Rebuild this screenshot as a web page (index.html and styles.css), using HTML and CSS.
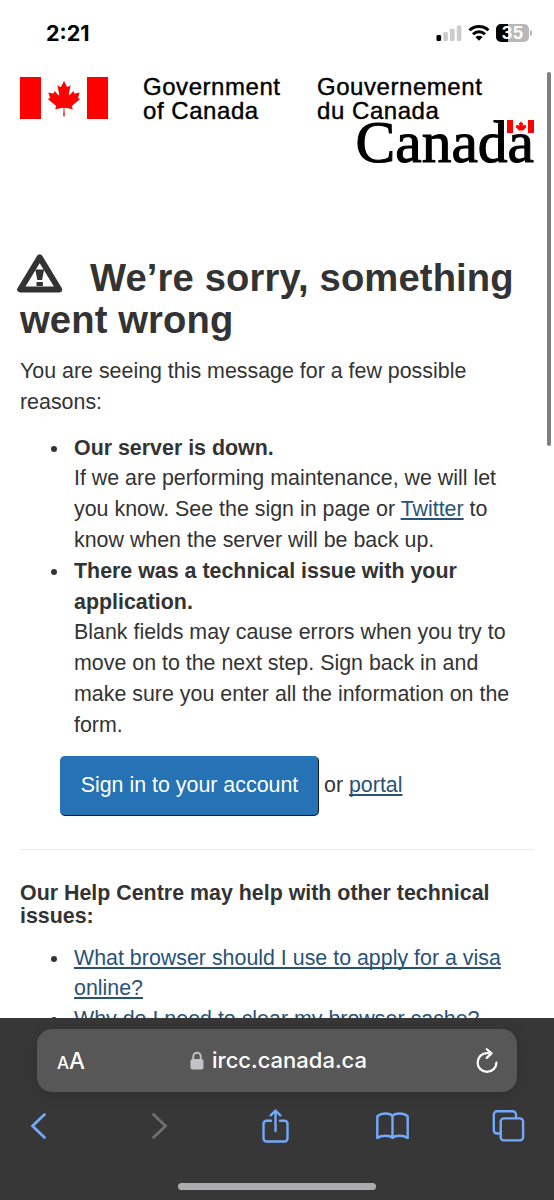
FILE: index.html
```html
<!DOCTYPE html>
<html lang="en">
<head>
  <meta charset="utf-8">
  <title>We’re sorry, something went wrong</title>
  <link rel="stylesheet" href="styles.css">
</head>
<body>
  <svg class="symbols">
    <symbol id="leaf" viewBox="-1950 -2030 3900 4060">
      <path d="m-90 2030 45-863a95 95 0 0 0-111-98l-859 151 116-320a65 65 0 0 0-20-73l-941-762 212-99a65 65 0 0 0 34-79l-186-572 542 115a65 65 0 0 0 73-38l105-247 423 454a65 65 0 0 0 111-57l-204-1052 327 189a65 65 0 0 0 91-27l332-652 332 652a65 65 0 0 0 91 27l327-189-204 1052a65 65 0 0 0 111 57l423-454 105 247a65 65 0 0 0 73 38l542-115-186 572a65 65 0 0 0 34 79l212 99-941 762a65 65 0 0 0-20 73l116 320-859-151a95 95 0 0 0-111 98l45 863z"/>
    </symbol>
  </svg>

  <div class="status-bar">
    <span class="time">2:21</span>
    <div class="status-icons">
      <svg class="signal" width="26" height="16" viewBox="0 0 26 16">
        <rect x="0.5" y="10" width="4.6" height="6" rx="1.3" fill="#000"/>
        <rect x="7.3" y="7" width="4.6" height="9" rx="1.3" fill="#ccc"/>
        <rect x="14" y="3.7" width="4.6" height="12.3" rx="1.3" fill="#ccc"/>
        <rect x="20.8" y="0.5" width="4.6" height="15.5" rx="1.3" fill="#ccc"/>
      </svg>
      <svg class="wifi" width="22" height="16" viewBox="0 0 22 16">
        <path d="M1.5 5.3a13.8 13.8 0 0 1 19 0M5 9.2a8.7 8.7 0 0 1 12 0" fill="none" stroke="#000" stroke-width="2.9"/>
        <path d="M7.4 12.1a5.3 5.3 0 0 1 7.2 0L11 15.8z"/>
      </svg>
      <div class="battery">35</div>
      <span class="battery-tip"></span>
    </div>
  </div>

  <main class="page">
    <header class="brand">
      <div class="flag"><svg><use href="#leaf"/></svg></div>
      <div class="gov gov-en">Government<br>of Canada</div>
      <div class="gov gov-fr">Gouvernement<br>du Canada</div>
    </header>
    <div class="wordmark">
      <span>Canada</span>
      <div class="flag flag-small"><svg><use href="#leaf"/></svg></div>
    </div>

    <h1><svg class="warning" width="46" height="39" viewBox="0 0 46 39">
        <path d="M22.7 3.4 3.2 35.5h39z" fill="none" stroke="#333" stroke-width="6" stroke-linejoin="round"/>
        <path d="M18.3 15.4h8.8l-2 10.7h-4.8zM19.5 28h6.4v4h-6.4z" fill="#333"/>
      </svg>We’re sorry, something went wrong</h1>
    <p>You are seeing this message for a few possible reasons:</p>
    <ul>
      <li><strong>Our server is down.</strong><br>If we are performing maintenance, we will let you know. See the sign in page or <a href="#">Twitter</a> to know when the server will be back up.</li>
      <li><strong>There was a technical issue with your application.</strong><br>Blank fields may cause errors when you try to move on to the next step. Sign back in and make sure you enter all the information on the form.</li>
    </ul>
    <div class="sign-in">
      <button>Sign in to your account</button>
      <span>or <a href="#">portal</a></span>
    </div>
    <hr>
    <h2>Our Help Centre may help with other technical issues:</h2>
    <ul>
      <li><a href="#">What browser should I use to apply for a visa online?</a></li>
      <li><a href="#">Why do I need to clear my browser cache?</a></li>
    </ul>
    <div class="scrollbar"></div>
  </main>

  <footer class="browser">
    <div class="address">
      <span class="text-size"><small>A</small>A</span>
      <div class="url">
        <svg width="14" height="19" viewBox="0 0 14 19">
          <path d="M3.3 9V5.4a3.7 3.7 0 0 1 7.4 0V9" fill="none" stroke="#c2c1c8" stroke-width="1.9"/>
          <rect x="0.5" y="8" width="13" height="10.5" rx="2" fill="#c2c1c8"/>
        </svg>
        <span>ircc.canada.ca</span>
      </div>
      <svg class="reload" width="22" height="26" viewBox="0 0 22 26" fill="none" stroke="#fff" stroke-width="2.2" stroke-linecap="round" stroke-linejoin="round">
        <path d="M20.4 14.5a9.4 9.4 0 1 1-9.4-9.4h4.500M10.800 1.200l4.700 4.200-4.700 4.500"/>
      </svg>
    </div>
    <nav class="toolbar">
      <svg height="26" viewBox="0 0 16 26"><path d="M14 1.6 2 13l12 11.4" stroke-width="2.8"/></svg>
      <svg class="off" height="26" viewBox="0 0 16 26"><path d="m2 1.6 12 11.4L2 24.4" stroke-width="2.8"/></svg>
      <svg height="34" viewBox="0 0 27 34"><path d="M9 11.7H4.500a3 3 0 0 0-3 3v14.800a3 3 0 0 0 3 3h18a3 3 0 0 0 3-3V14.700a3 3 0 0 0-3-3H18M13.500 22V1.700M8.700 6.300l4.800-4.800 4.800 4.800"/></svg>
      <svg height="28" viewBox="0 0 33 28"><path d="M16.500 4.300C14 .6 5.400.6 1.300 4.300v21.600c4-2.800 12.500-2.800 15.200 0M16.500 4.300c2.500-3.700 11.100-3.700 15.200 0v21.600c-4-2.800-12.500-2.800-15.200 0zM16.500 4.300v21.600"/></svg>
      <svg height="32" viewBox="0 0 32 32"><path d="M8 23.500H4.500a3.200 3.200 0 0 1-3.200-3.200V4.500a3.200 3.200 0 0 1 3.200-3.200h15.800a3.200 3.200 0 0 1 3.200 3.200V8"/><rect x="8.200" y="8.400" width="22.400" height="22" rx="3.200"/></svg>
    </nav>
    <div class="home-bar"></div>
  </footer>
</body>
</html>
```

FILE: styles.css
```css
* {
  box-sizing: border-box;
}

body {
  display: flex;
  flex-direction: column;
  height: 1200px;
  margin: 0;
  overflow: hidden;
  background-color: #fff;
  color: #333;
  font-family: "Liberation Sans", Arial, sans-serif;
  font-size: 21.4px;
  line-height: 30.8px;
}

.symbols {
  position: absolute;
  width: 0;
  height: 0;
}

.status-bar {
  display: flex;
  justify-content: space-between;
  height: 72px;
  padding: 18px 22px 0 46px;
  color: #000;
  font-family: Inter, sans-serif;
}

.time {
  font-size: 21.5px;
  font-weight: 700;
}

.status-icons {
  display: flex;
  height: 30px;
  align-items: center;
}

.wifi {
  margin: 0 6px 0 6px;
}

.battery {
  width: 33px;
  height: 18px;
  border-radius: 5px;
  background: linear-gradient(to right, #000 12px, #b8b8b8 12px);
  color: #fff;
  font-size: 17px;
  font-weight: 700;
  line-height: 18px;
  text-align: center;
}

.battery-tip {
  width: 2px;
  height: 6px;
  margin-left: 1px;
  border-radius: 0 2px 2px 0;
  background-color: #b8b8b8;
}

.page {
  position: relative;
  height: 946px;
  padding: 5px 20px 0;
  overflow: hidden;
}

.brand {
  display: flex;
  height: 43px;
}

.flag {
  display: flex;
  justify-content: center;
  align-items: center;
  width: 88px;
  height: 42px;
  border: solid #f00;
  border-width: 0 21px;
}

.flag svg {
  width: 34px;
  height: 37px;
  fill: #f00;
}

.gov {
  margin-top: -2px;
  color: #000;
  font-size: 24px;
  line-height: 24px;
  letter-spacing: 0.55px;
  -webkit-text-stroke: 0.4px #000;
}

.gov-en {
  width: 174px;
  margin-left: 35px;
}

.wordmark {
  position: relative;
  height: 134px;
  color: #000;
  font-family: "Liberation Serif", serif;
  font-size: 59.5px;
  line-height: 45px;
  text-align: right;
  -webkit-text-stroke: 1.1px #000;
}

.flag-small {
  position: absolute;
  top: 0;
  right: 0;
  width: 27px;
  height: 13px;
  border-width: 0 6px;
  background-color: #fff;
}

.flag-small svg {
  width: 12px;
  height: 12px;
}

h1 {
  margin: 0 0 15px;
  font-size: 38.2px;
  line-height: 42px;
  letter-spacing: 0.13px;
}

.warning {
  margin: 0 27px 0 -3px;
  vertical-align: -2px;
}

p {
  margin: 0 0 15px;
}

ul {
  margin: 0;
  padding-left: 50px;
}

li {
  padding-left: 4px;
}

a {
  color: #295376;
  text-decoration-skip-ink: none;
  text-underline-offset: 2px;
}

.sign-in {
  display: flex;
  align-items: center;
  gap: 5px;
  margin: 15px 0 33px 40px;
}

button {
  width: 259px;
  height: 60px;
  padding: 0;
  border: 1px solid;
  border-color: #2572b4 #091c2d #091c2d #2572b4;
  border-radius: 5px;
  background-color: #2572b4;
  color: #fff;
  font: inherit;
}

hr {
  width: 100%;
  margin: 0 0 32px;
  border: 0;
  border-top: 1px solid #eaebed;
}

h2 {
  margin: 0 0 15px;
  font-size: 21.4px;
  line-height: 23px;
}

.scrollbar {
  position: absolute;
  top: 0;
  right: 3px;
  width: 4px;
  height: 374px;
  border-radius: 2px;
  background-color: #7f7f7f;
}

.browser {
  height: 182px;
  padding: 11px 37px 0;
  background-color: #373737;
}

.address {
  display: flex;
  justify-content: space-between;
  align-items: center;
  width: 480px;
  height: 63px;
  padding: 0 19px 0 20px;
  border-radius: 15px;
  background-color: #575757;
  box-shadow: 0 2px 14px rgba(0, 0, 0, 0.15);
  color: #fff;
  font-family: Inter, sans-serif;
}

.text-size {
  padding-top: 4px;
  font-size: 22.5px;
  font-weight: 500;
}

.text-size small {
  font-size: 17px;
}

.url {
  display: flex;
  align-items: center;
  gap: 8px;
  margin-right: 4px;
  font-size: 22px;
  font-weight: 500;
}

.toolbar {
  display: flex;
  justify-content: space-between;
  align-items: center;
  height: 67px;
  margin: 0 -8px 0 -15px;
}

.toolbar svg {
  width: 33px;
  fill: none;
  stroke: #73a9fa;
  stroke-width: 2.4;
  stroke-linecap: round;
  stroke-linejoin: round;
}

.toolbar .off {
  margin-left: 4px;
  stroke: #707070;
}

.home-bar {
  width: 198px;
  height: 7px;
  margin: 24px auto 0;
  border-radius: 4px;
  background-color: #acacae;
}
```
